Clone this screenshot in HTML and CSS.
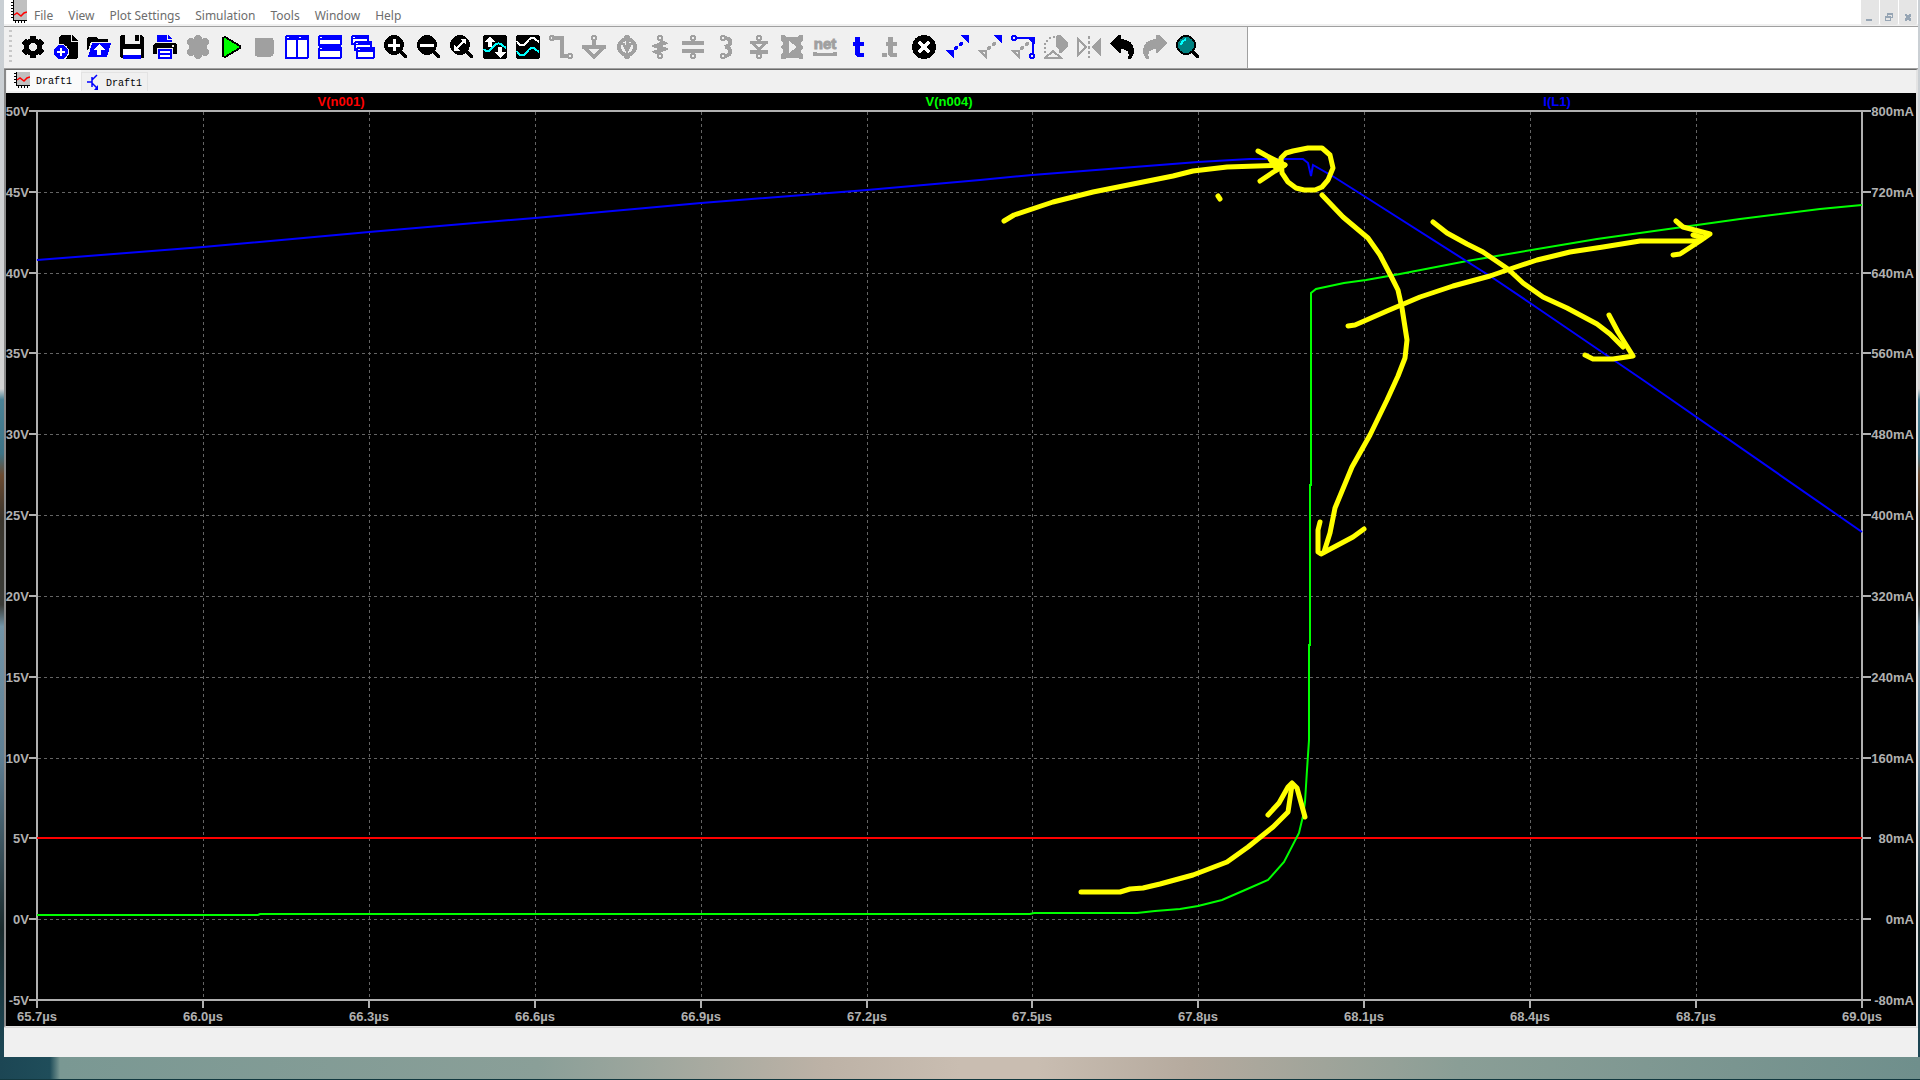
FILE: index.html
```
<!DOCTYPE html>
<html lang="en">
<head>
    <meta charset="UTF-8">
    <meta name="viewport" content="width=device-width, initial-scale=1.0">
    <title>Draft1</title>
    <link rel="stylesheet" href="styles.css">
</head>
<body>
    <div class="window">
        <!-- menu bar -->
        <header class="menubar">
            <svg class="app-icon" viewBox="0 0 16 23"><path fill="#c0c0c0" d="M2 0h14v20H2z"/><path stroke="#000" fill="none" d="M2.500 0v21M2 20.500h14M0 2.500h2M0 5.500h2M0 8.500h2M0 11.500h2M0 14.500h2M0 17.500h2M4.500 21v2M7.500 21v2M10.500 21v2M13.500 21v2"/><path stroke="#f00" stroke-width="1.500" fill="none" d="M3 15l3-2 4 3 3-3 3-1"/></svg>
            <nav class="menu">
                <a href="#">File</a>
                <a href="#">View</a>
                <a href="#">Plot Settings</a>
                <a href="#">Simulation</a>
                <a href="#">Tools</a>
                <a href="#">Window</a>
                <a href="#">Help</a>
            </nav>
            <div class="window-buttons">
                <button aria-label="Minimize"><svg viewBox="0 0 18 24"><path d="M5 18h6v2H5z"/></svg></button>
                <button aria-label="Restore"><svg viewBox="0 0 18 24"><path d="M7 12h6v5h-2v-1h1v-2H8v1H7zM5 15h6v5H5zM6 17v2h4v-2z" fill-rule="evenodd"/></svg></button>
                <button aria-label="Close"><svg viewBox="0 0 18 24"><path d="M6 13h2l1 2 1-2h2v2l-1 1 1 2v2h-2l-1-2-1 2H6v-2l1-2-1-1z"/></svg></button>
            </div>
        </header>

        <!-- toolbar -->
        <div class="toolbar-row">
            <div class="toolbar">
                <span class="grip"></span>
                <button aria-label="Settings"><svg viewBox="0 0 24 24"><path stroke="#000" stroke-width="7" stroke-linecap="round" d="M12 4v16M5 8l14 8M5 16l14-8"/><circle cx="12" cy="12" r="9"/><circle cx="12" cy="12" r="4" fill="#f0f0f0"/></svg></button>
                <button aria-label="New"><svg viewBox="0 0 24 24"><path d="M7 0h10v7h7v15l-2 2H7l-2-2V2z"/><path d="M18 0l6 6h-6z"/><circle cx="7" cy="17" r="8" fill="#f0f0f0"/><circle cx="7" cy="17" r="7" fill="#00f"/><path stroke="#fff" stroke-width="2" d="M7 13v8M3 17h8"/></svg></button>
                <button aria-label="Open"><svg viewBox="0 0 24 24"><path d="M0 3l1-1h8l2 2h9l1 1v2H4L1 15H0z"/><path fill="#00f" d="M5 8h19l-4 14H1z"/><path fill="#fff" d="M12 9l6 6h-4v5h-4v-5H6z"/></svg></button>
                <button aria-label="Save"><svg viewBox="0 0 24 24"><path d="M1 0h4v9h15V0h1l3 3v20H1l-1-1V1zM15 0h4v6h-4z"/><path fill="#fff" d="M3 14h18v6H3z"/><path fill="#00f" d="M3 20h18v4H3z"/></svg></button>
                <button aria-label="Print"><svg viewBox="0 0 24 24"><path fill="#00f" d="M4 0h10v5h5v2H4zM15 0l4 4h-4z"/><path d="M2 8h20l2 2v9h-4v-6H4v6H0v-9z"/><path fill="#f0f0f0" d="M19 10h2v2h-2z"/><path fill="#00f" d="M5 14h14v10H5z"/><path stroke="#fff" stroke-width="2" d="M7 17h10M7 21h10"/></svg></button>
                <button class="off" aria-label="Simulation settings"><svg viewBox="0 0 24 24"><path stroke-width="8" stroke-linecap="round" d="M12 4v16M5 7l14 10M5 17l14-10"/><circle cx="12" cy="12" r="9"/></svg></button>
                <button aria-label="Run"><svg viewBox="0 0 24 24"><path fill="#0f0" stroke="#000" stroke-width="2" stroke-linejoin="round" d="M4 3l2-1 15 9v2L6 22l-2-1z"/></svg></button>
                <button class="off" aria-label="Stop"><svg viewBox="0 0 24 24"><rect x="3" y="3" width="18" height="18" rx="2"/></svg></button>
                <button aria-label="Tile vertically"><svg viewBox="0 0 24 24"><g fill="#fff" stroke="#00f" stroke-width="2"><rect x="1" y="1" width="11" height="22" rx="1"/><rect x="12" y="1" width="11" height="22" rx="1"/></g><path fill="#00f" d="M1 1h22v4H1z"/><path fill="#fff" d="M2 2h2v1H2zM14 2h2v1h-2z"/></svg></button>
                <button aria-label="Tile horizontally"><svg viewBox="0 0 24 24"><g fill="#fff" stroke="#00f" stroke-width="2"><rect x="1" y="1" width="22" height="9" rx="1"/><rect x="1" y="13" width="22" height="10" rx="1"/></g><path fill="#00f" d="M1 1h22v4H1zM1 11h22v5H1z"/><path fill="#fff" d="M2 2h2v1H2zM2 13h2v1H2z"/></svg></button>
                <button aria-label="Cascade"><svg viewBox="0 0 24 24"><g fill="#fff" stroke="#00f" stroke-width="2"><rect x="1" y="1" width="16" height="8" rx="1"/><rect x="4" y="7" width="16" height="8" rx="1"/><rect x="6" y="13" width="17" height="10" rx="1"/></g><path fill="#00f" d="M1 1h16v3H1zM4 7h16v3H4zM6 13h17v4H6z"/><path fill="#fff" d="M2 2h2v1H2zM5 8h2v1H5zM7 14h2v1H7z"/></svg></button>
                <button aria-label="Zoom in"><svg viewBox="0 0 24 24"><circle cx="10" cy="10" r="10"/><path stroke="#000" stroke-width="3" stroke-linecap="round" d="M15 15l7 7"/><path stroke="#fff" stroke-width="3" d="M10 4v12M4 10h12"/></svg></button>
                <button aria-label="Zoom out"><svg viewBox="0 0 24 24"><circle cx="10" cy="10" r="10"/><path stroke="#000" stroke-width="3" stroke-linecap="round" d="M15 15l7 7"/><path stroke="#fff" stroke-width="3" d="M3 10h14"/></svg></button>
                <button aria-label="Zoom to fit"><svg viewBox="0 0 24 24"><circle cx="10" cy="10" r="10"/><path stroke="#000" stroke-width="3" stroke-linecap="round" d="M15 15l7 7"/><path stroke="#fff" stroke-width="2" d="M6 14l8-8"/><path fill="#fff" d="M10 4h6v6zM4 10v6h6z"/></svg></button>
                <button aria-label="Autorange"><svg viewBox="0 0 24 24"><rect width="24" height="24" rx="3"/><path fill="none" stroke="#0ff" stroke-width="2" d="M1 14c2 3 5 3 7 0l3-3c3-4 6-3 8-1l4 3"/><path fill="#fff" d="M7 1l5 6H9v5H5V7H2zM17 23l-5-6h3v-5h4v5h4z"/></svg></button>
                <button aria-label="Plot traces"><svg viewBox="0 0 24 24"><rect width="24" height="24" rx="3"/><g fill="none" stroke-width="2"><path stroke="#fff" d="M1 6c2 5 6 6 9 2s6-7 9-4l4 3"/><path stroke="#0ff" d="M1 16c2 5 6 6 9 2s6-7 9-4l4 3"/></g></svg></button>
                <button class="off line" aria-label="Wire"><svg viewBox="0 0 24 24"><path stroke-width="4" d="M3 3h10v18h6"/><circle cx="3" cy="3" r="2"/><circle cx="21" cy="21" r="2"/></svg></button>
                <button class="off line" aria-label="Ground"><svg viewBox="0 0 24 24"><circle cx="12" cy="3" r="2"/><path stroke-width="4" d="M12 5v7"/><path stroke-width="4" d="M0 12h24M3 13l9 9 9-9"/></svg></button>
                <button class="off line" aria-label="Voltage"><svg viewBox="0 0 24 24"><circle cx="12" cy="12" r="8" stroke-width="4"/><circle cx="12" cy="3" r="2"/><circle cx="12" cy="21" r="2"/><path stroke-width="3" d="M8 8l4 8 4-8M12 5v8"/></svg></button>
                <button class="off line" aria-label="Resistor"><svg viewBox="0 0 24 24"><circle cx="12" cy="3" r="2"/><circle cx="12" cy="21" r="2"/><path stroke-width="4" d="M12 6l4 2-8 3 8 3-8 3 4 2"/></svg></button>
                <button class="off line" aria-label="Capacitor"><svg viewBox="0 0 24 24"><circle cx="12" cy="3" r="2"/><circle cx="12" cy="21" r="2"/><path stroke-width="4" d="M1 8h22M1 16h22"/></svg></button>
                <button class="off line" aria-label="Inductor"><svg viewBox="0 0 24 24"><circle cx="9" cy="3" r="2"/><circle cx="9" cy="21" r="2"/><path stroke-width="4" d="M11 3c7 1 7 7 0 9 7 1 7 8 0 9"/></svg></button>
                <button class="off line" aria-label="Diode"><svg viewBox="0 0 24 24"><circle cx="12" cy="3" r="2"/><circle cx="12" cy="21" r="2"/><path stroke-width="3" d="M3 7h18M5 7l7 8 7-8"/><path stroke-width="4" d="M3 17h18"/></svg></button>
                <button class="off" aria-label="Component"><svg viewBox="0 0 24 24"><path stroke="none" d="M1 0h4l1 2h12l1-2h4v6l-2 1v3l2 1v3l-2 1v3l2 1v5h-4l-1-1H6l-1 1H1v-5l2-2v-3l-2-1v-2l2-2V7L1 6z"/><path stroke="none" fill="#f0f0f0" d="M9 6l8 6-8 6z"/></svg></button>
                <button class="off" aria-label="Label net"><svg viewBox="0 0 24 24"><text class="net" x="12" y="14" text-anchor="middle">net</text><path stroke-width="3" d="M2 19h20"/><circle cx="2" cy="19" r="2"/><circle cx="22" cy="19" r="2"/></svg></button>
                <button aria-label="Text"><svg viewBox="0 0 24 24"><path fill="#00f" d="M9 2h5v5h4v4h-4v7h4v4h-6l-3-2v-9H7V7h2z"/></svg></button>
                <button class="off" aria-label="SPICE directive"><svg viewBox="0 0 24 24"><path stroke="none" d="M9 2h5v5h4v4h-4v7h4v4h-6l-3-2v-9H7V7h2z"/><rect stroke="none" x="3" y="18" width="5" height="4" rx="1"/></svg></button>
                <button aria-label="Delete"><svg viewBox="0 0 24 24"><circle cx="12" cy="12" r="12"/><path stroke="#fff" stroke-width="4" stroke-linecap="round" d="M8 8l8 8M16 8l-8 8"/></svg></button>
                <button aria-label="Duplicate"><svg viewBox="0 0 24 24"><path fill="#00f" d="M15 0h9v9zM0 15h9v9z"/><g fill="#00f"><circle cx="11" cy="13" r="2"/><circle cx="16" cy="9" r="2"/></g></svg></button>
                <button aria-label="Move"><svg viewBox="0 0 24 24"><path fill="#00f" d="M15 0h9v9z"/><path fill="none" stroke="#a0a0a0" stroke-width="2" d="M2 16h6v6z"/><g fill="#a0a0a0"><circle cx="11" cy="13" r="2"/><circle cx="16" cy="9" r="2"/></g></svg></button>
                <button aria-label="Drag"><svg viewBox="0 0 24 24"><path fill="none" stroke="#a0a0a0" stroke-width="2" d="M2 16h6v6z"/><g fill="#a0a0a0"><circle cx="11" cy="13" r="2"/><circle cx="16" cy="9" r="2"/></g><path fill="#00f" d="M15 2h9v7l-3-1z"/><g fill="none" stroke="#00f" stroke-width="2"><circle cx="3" cy="3" r="2"/><circle cx="21" cy="21" r="2"/><path d="M5 3h18v4M22 2v17"/></g></svg></button>
                <button class="off" aria-label="Rotate"><svg viewBox="0 0 24 24"><path stroke="none" d="M13 0h3l8 8v3l-7 7h-2v-3l-3-3V3z"/><path fill="none" stroke-width="2" d="M1 23l8-7 8 7z"/><path fill="none" stroke-width="2" stroke-dasharray="2 2" d="M1 18V8l6-6h6"/></svg></button>
                <button class="off" aria-label="Mirror"><svg viewBox="0 0 24 24"><path stroke="none" d="M24 3v18L14 12z"/><path fill="none" stroke-width="2" d="M1 4v16l8-8z"/><path fill="none" stroke-width="2" stroke-dasharray="3 2" d="M12 1v22"/></svg></button>
                <button aria-label="Undo"><svg viewBox="0 0 24 24"><path d="M0 8l8-8h3v4c8 0 13 5 13 12 0 4-2 7-4 8h-2c2-6 0-10-7-10v4H9z"/></svg></button>
                <button class="off" aria-label="Redo"><svg viewBox="0 0 24 24"><path stroke="none" d="M24 8l-8-8h-3v4C5 4 0 9 0 16c0 4 2 7 4 8h2c-2-6 0-10 7-10v4h2z"/></svg></button>
                <button aria-label="Find"><svg viewBox="0 0 24 24"><path stroke="#000" stroke-width="3" stroke-linecap="round" d="M16 16l6 6"/><circle cx="10" cy="10" r="9" fill="#008080" stroke="#000" stroke-width="2"/><path fill="none" stroke="#0ff" stroke-width="2" d="M5 10l1-3 4-3"/></svg></button>
            </div>
        </div>

        <main class="document">
            <!-- document tabs -->
            <div class="tabs">
                <a href="#" class="tab active"><svg class="tab-icon" viewBox="0 0 16 16"><path fill="#c0c0c0" d="M2 0h14v13H2z"/><path stroke="#000" fill="none" d="M2.500 0v14M2 13.500h14M0 1.500h2M0 4.500h2M0 7.500h2M0 10.500h2M4.500 14v2M7.500 14v2M10.500 14v2M13.500 14v2"/><path stroke="#f00" stroke-width="1.500" fill="none" d="M3 8l3-2 4 3 3-3 3-1"/></svg><span>Draft1</span></a>
                <a href="#" class="tab"><svg class="tab-icon" viewBox="0 0 16 16"><path stroke="#00f" stroke-width="1.500" fill="none" d="M0 8h5M5 3v10M5 6l5-5M5 9l5 5"/><path fill="#00f" d="M11 16H7l4-5z"/></svg><span>Draft1</span></a>
            </div>

            <!-- waveform pane -->
            <svg class="plot" viewBox="6 93 1910 933">
                <path class="grid" d="M38 192.500H1862M38 273.500H1862M38 353.500H1862M38 434.500H1862M38 515.500H1862M38 596.500H1862M38 677.500H1862M38 758.500H1862M38 838.500H1862M38 919.500H1862"/>
                <path class="grid" d="M203.500 112V1000M369.500 112V1000M535.500 112V1000M701.500 112V1000M867.500 112V1000M1032.500 112V1000M1198.500 112V1000M1364.500 112V1000M1530.500 112V1000M1696.500 112V1000"/>
                <path class="axis" d="M29 111H1871M29 1000H1871M37 111V1008M1862 111V1008"/>
                <path class="axis" d="M29 192h8M29 273h8M29 353h8M29 434h8M29 515h8M29 596h8M29 677h8M29 758h8M29 838h8M29 919h8"/>
                <path class="axis" d="M1862 192h9M1862 273h9M1862 353h9M1862 434h9M1862 515h9M1862 596h9M1862 677h9M1862 758h9M1862 838h9M1862 919h9"/>
                <path class="axis" d="M203 1000v8M369 1000v8M535 1000v8M701 1000v8M867 1000v8M1032 1000v8M1198 1000v8M1364 1000v8M1530 1000v8M1696 1000v8"/>

                <!-- traces -->
                <path class="trace red" d="M37 838H1862"/>
                <path class="trace green" d="M37 915H258L260 914H1030L1034 913H1137L1155 911L1180 909L1198 906L1222 900L1245 890L1268 880L1284 862L1299 833L1303 816L1305 802L1307 770L1309 740L1309 645L1310 645V485H1311V293L1316 289L1344 283L1366 280L1400 274L1467 261L1597 239L1740 219L1820 209L1862 205"/>
                <path class="trace blue" d="M37 260L203 247L369 232L535 218L701 203L867 190L980 180L1032 175L1198 162L1250 159H1303L1308 163L1311 176L1313 165L1334 177L1364 196L1493 278L1530 303L1643 380L1862 532"/>

                <!-- axis labels -->
                <g class="label end">
                    <text x="29" y="116">50V</text>
                    <text x="29" y="197">45V</text>
                    <text x="29" y="278">40V</text>
                    <text x="29" y="358">35V</text>
                    <text x="29" y="439">30V</text>
                    <text x="29" y="520">25V</text>
                    <text x="29" y="601">20V</text>
                    <text x="29" y="682">15V</text>
                    <text x="29" y="763">10V</text>
                    <text x="29" y="843">5V</text>
                    <text x="29" y="924">0V</text>
                    <text x="29" y="1005">-5V</text>
                    <text x="1914" y="116">800mA</text>
                    <text x="1914" y="197">720mA</text>
                    <text x="1914" y="278">640mA</text>
                    <text x="1914" y="358">560mA</text>
                    <text x="1914" y="439">480mA</text>
                    <text x="1914" y="520">400mA</text>
                    <text x="1914" y="601">320mA</text>
                    <text x="1914" y="682">240mA</text>
                    <text x="1914" y="763">160mA</text>
                    <text x="1914" y="843">80mA</text>
                    <text x="1914" y="924">0mA</text>
                    <text x="1914" y="1005">-80mA</text>
                </g>
                <g class="label middle">
                    <text x="37" y="1021">65.7µs</text>
                    <text x="203" y="1021">66.0µs</text>
                    <text x="369" y="1021">66.3µs</text>
                    <text x="535" y="1021">66.6µs</text>
                    <text x="701" y="1021">66.9µs</text>
                    <text x="867" y="1021">67.2µs</text>
                    <text x="1032" y="1021">67.5µs</text>
                    <text x="1198" y="1021">67.8µs</text>
                    <text x="1364" y="1021">68.1µs</text>
                    <text x="1530" y="1021">68.4µs</text>
                    <text x="1696" y="1021">68.7µs</text>
                    <text x="1862" y="1021">69.0µs</text>
                    <text class="name-red" x="341" y="106">V(n001)</text>
                    <text class="name-green" x="949" y="106">V(n004)</text>
                    <text class="name-blue" x="1557" y="106">I(L1)</text>
                </g>

                <!-- pen marks -->
                <g class="pen">
                    <path d="M1004 221L1014 215L1053 202L1093 192L1133 184L1173 176L1193 171L1227 167L1285 165"/>
                    <path d="M1258 151L1267 156L1285 165L1275 171L1260 181M1270 159L1276 168"/>
                    <path d="M1281 158L1286 153L1293 151L1308 148H1322L1330 155L1333 168L1328 180L1322 187L1315 190H1304L1296 188L1288 182L1282 173Z"/>
                    <path d="M1218 196L1220 199"/>
                    <path d="M1322 195L1343 217L1368 238L1380 255L1392 278L1398 290L1402 308L1407 340L1405 358L1398 376L1387 400L1370 435L1352 467L1335 508L1330 533L1324 552"/>
                    <path d="M1320 522L1318 530V552L1321 554L1353 537L1364 529"/>
                    <path d="M1433 222L1447 233L1467 244L1483 252L1508 269L1523 283L1543 297L1567 308L1597 324L1610 334L1623 347"/>
                    <path d="M1609 315L1618 332L1633 356L1613 359H1593L1585 355"/>
                    <path d="M1348 326L1355 325L1387 311L1420 297L1453 286L1490 276L1510 269L1537 260L1570 252L1603 247L1640 241H1697"/>
                    <path d="M1676 221L1683 227L1710 234L1700 241L1680 254L1673 255M1693 235L1704 238"/>
                    <path d="M1081 892H1120L1130 889L1143 888L1160 884L1193 875L1227 862L1248 847L1273 827L1288 812L1292 785"/>
                    <path d="M1268 815L1279 803L1288 787L1292 783L1297 788L1305 817"/>
                </g>
            </svg>
        </main>

        <footer class="statusbar"></footer>
    </div>
</body>
</html>
```
FILE: styles.css
```
* {
    margin: 0;
    padding: 0;
    box-sizing: border-box;
}

/* desktop behind the window */
body {
    height: 100vh;
    padding: 0 2px 23px 4px;
    overflow: hidden;
    background:
        linear-gradient(#12383f, #12383f) bottom / 100% 1px no-repeat,
        linear-gradient(90deg, #1c4654 0, #1f4d5a 50px, #7a9893 60px, #8a9f98 28%, #bdb2a6 43%, #c9bdb1 50%, #c9bdb1 54%, #b5aa9e 62%, #8a9e96 76%, #6f8f8c 100%) bottom / 100% 23px no-repeat,
        linear-gradient(#c9cfd4 0, #d3d3d3 36%, #4b8296 37%, #3d7386 42%, #6b4a30 44%, #3a352c 48%, #3a3c38 56%, #7395a8 58%, #5f7f94 70%, #1a2a2c 86%, #1c4654 97%);
    font-family: "Liberation Sans", Arial, sans-serif;
}

.window {
    display: flex;
    flex-direction: column;
    height: 100%;
    background-color: #fff;
}

/* menu bar */
.menubar {
    display: flex;
    height: 27px;
    padding: 0 1px 0 7px;
    border-bottom: 1px solid #a0a0a0;
    box-shadow: inset 0 -2px #f0f0f0;
    flex-shrink: 0;
}

.app-icon {
    width: 16px;
    height: 23px;
}

.menu {
    display: flex;
    gap: 15px;
    padding: 7px 0 0 7px;
    flex: 1;
}

.menu a {
    color: #6d6d6d;
    font: 12px/18px "Noto Sans", sans-serif;
    text-decoration: none;
}

.window-buttons {
    display: flex;
    gap: 1px;
}

.window-buttons button {
    width: 18px;
    height: 25px;
    border: none;
    border-radius: 0 0 2px 2px;
    background-color: #e5e5e5;
}

.window-buttons svg {
    display: block;
    fill: #96a5b4;
    shape-rendering: crispEdges;
}

/* toolbar */
.toolbar-row {
    display: flex;
    height: 42px;
    border-bottom: 1px solid #a0a0a0;
    flex-shrink: 0;
}

.toolbar {
    display: flex;
    align-items: center;
    gap: 9px;
    padding: 0 47px 2px 5px;
    border-right: 1px solid #a0a0a0;
    background-color: #f0f0f0;
}

.toolbar .grip {
    width: 3px;
    height: 34px;
    background: repeating-linear-gradient(#c8c8c8 0 2px, #f0f0f0 2px 5px);
}

.toolbar button {
    width: 24px;
    height: 24px;
    border: none;
    background: none;
}

.toolbar svg {
    display: block;
    width: 24px;
    height: 24px;
    shape-rendering: crispEdges;
}

.toolbar .off svg {
    fill: #a0a0a0;
    stroke: #a0a0a0;
}

.toolbar .line svg {
    fill: none;
    stroke-width: 2px;
}

.net {
    font-weight: bold;
    font-size: 15px;
    stroke-width: 1px;
}

/* document area */
.document {
    display: flex;
    flex-direction: column;
    flex: 1;
    min-height: 0;
    border-top: 1px solid #696969;
    border-left: 2px solid #8a8a8a;
    border-right: 2px solid #e3e3e3;
    border-bottom: 1px solid #e3e3e3;
}

.tabs {
    display: flex;
    align-items: flex-end;
    height: 23px;
    padding: 0 0 2px 1px;
    background-color: #f0f0f0;
    flex-shrink: 0;
}

.tab {
    display: flex;
    align-items: center;
    gap: 3px;
    height: 19px;
    padding: 0 5px;
    border: 1px solid #e3e3e3;
    border-bottom: none;
    color: #000;
    font: 10px/16px "Liberation Mono", monospace;
    text-decoration: none;
}

.tab span {
    padding-top: 3px;
}

.tab.active {
    gap: 6px;
    height: 21px;
    padding: 0 9px 1px 7px;
    background-color: #fafafa;
    border: none;
}

.tab-icon {
    width: 16px;
    height: 16px;
}

/* waveforms */
.plot {
    display: block;
    flex: 1;
    min-height: 0;
    width: 100%;
    background-color: #000;
}

.grid,
.axis,
.trace,
.pen {
    fill: none;
}

.grid,
.axis {
    shape-rendering: crispEdges;
}

.grid {
    stroke: #646464;
    stroke-dasharray: 3 3;
}

.axis {
    stroke: #b0b0b0;
    stroke-width: 2px;
}

.trace {
    stroke-width: 2px;
}

.red {
    stroke: #f00;
}

.green {
    stroke: #0f0;
}

.blue {
    stroke: #00f;
}

.pen {
    stroke: #ff0;
    stroke-width: 5px;
    stroke-linecap: round;
    stroke-linejoin: round;
}

.label {
    fill: #b0b0b0;
    font-size: 13px;
    font-weight: bold;
}

.end {
    text-anchor: end;
}

.middle {
    text-anchor: middle;
}

.name-red {
    fill: #f00;
}

.name-green {
    fill: #0f0;
}

.name-blue {
    fill: #00f;
}

/* status bar */
.statusbar {
    height: 30px;
    border-top: 1px solid #d7d7d7;
    background-color: #f0f0f0;
    flex-shrink: 0;
}
```
